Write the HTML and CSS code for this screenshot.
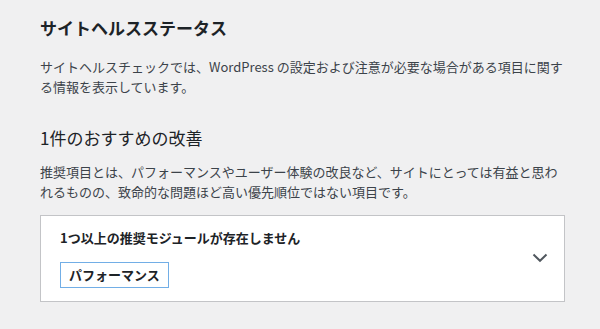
FILE: index.html
```html
<!DOCTYPE html>
<html lang="ja">
<head>
<meta charset="utf-8">
<link rel="stylesheet" href="styles.css">
</head>
<body>
<div class="page">
  <h1 class="title">サイトヘルスステータス</h1>
  <p class="desc">サイトヘルスチェックでは、WordPress の設定および注意が必要な場合がある項目に関する情報を表示しています。</p>
  <h2 class="subtitle">1件のおすすめの改善</h2>
  <p class="desc desc-2">推奨項目とは、パフォーマンスやユーザー体験の改良など、サイトにとっては有益と思われるものの、致命的な問題ほど高い優先順位ではない項目です。</p>
  <div class="item">
    <div class="item-body">
      <div class="item-title">1つ以上の推奨モジュールが存在しません</div>
      <span class="badge">パフォーマンス</span>
    </div>
    <svg class="chevron" width="16" height="10" viewBox="0 0 16 10" aria-hidden="true">
      <path d="M1.5 1.5 L8 7.8 L14.5 1.5" fill="none" stroke="#50575e" stroke-width="2"/>
    </svg>
  </div>
</div>
</body>
</html>
```
FILE: styles.css
```css
html, body {
  margin: 0;
  padding: 0;
  background: #f0f0f1;
}
body {
  font-family: "Noto Sans CJK JP", "Noto Sans", sans-serif;
  color: #3c434a;
}
.page {
  width: 525px;
  padding: 17px 0 0 40px;
}
.title {
  margin: 0;
  font-size: 17px;
  line-height: 22px;
  font-weight: 700;
  color: #1d2327;
}
.desc {
  margin: 18px 0 0;
  font-size: 13px;
  line-height: 20px;
}
.subtitle {
  margin: 30px 0 0;
  font-size: 17px;
  line-height: 22px;
  font-weight: 400;
  color: #1d2327;
}
.desc-2 {
  margin-top: 13px;
}
.item {
  margin-top: 13px;
  display: flex;
  align-items: center;
  justify-content: space-between;
  background: #fff;
  border: 1px solid #c3c4c7;
  padding: 12px 16px 13px 19px;
}
.item-body {
  display: flex;
  flex-direction: column;
  align-items: flex-start;
}
.item-title {
  font-size: 13px;
  line-height: 20px;
  font-weight: 700;
  color: #1d2327;
}
.badge {
  margin-top: 14px;
  border: 1px solid #72aee6;
  padding: 1px 8px;
  font-size: 13px;
  line-height: 22px;
  font-weight: 700;
  color: #1d2327;
}
.chevron {
  display: block;
}
```
